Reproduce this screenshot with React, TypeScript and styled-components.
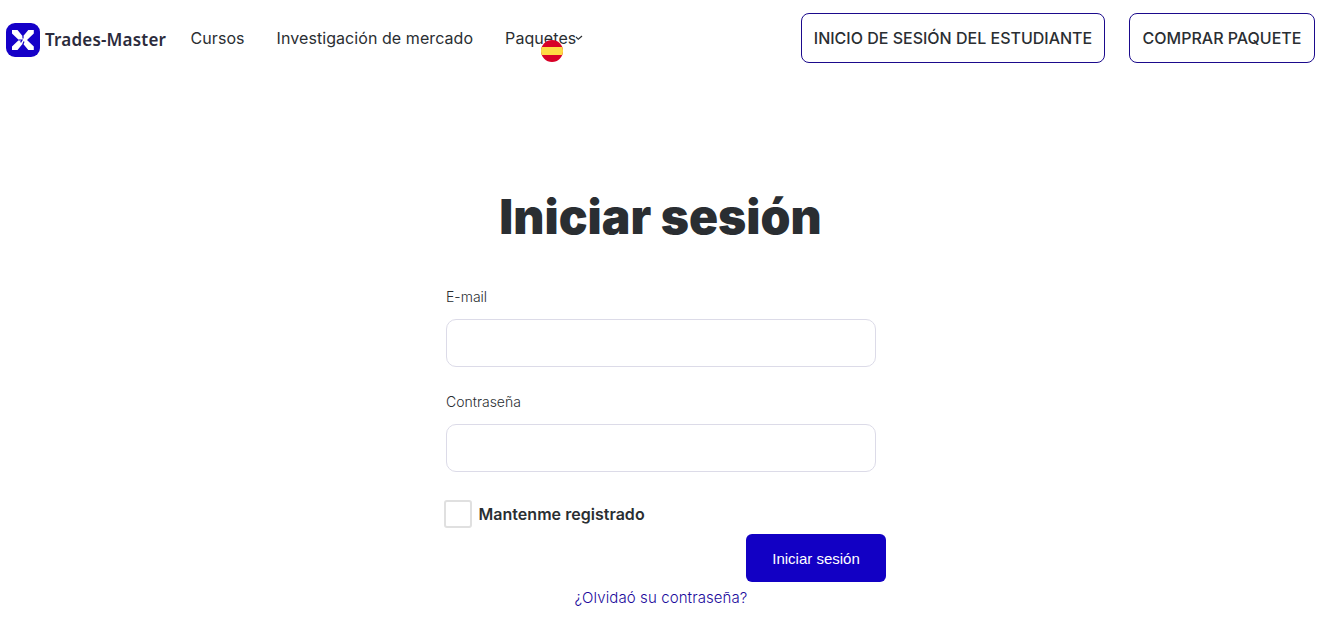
import { ReactNode } from "react"
import styled, { createGlobalStyle } from "styled-components"

const GlobalStyle = createGlobalStyle`
    * {
        box-sizing: border-box;
    }

    body {
        margin: 0;
        background: #fff;
        color: #2a2e32;
        font-family: Inter, "Liberation Sans", sans-serif;
    }
`

const Header = styled.header`
    display: flex;
    align-items: center;
    height: 76px;
    padding: 0 13px 0 6px;
`

const Logo = styled.a`
    display: flex;
    align-items: center;
    gap: 5px;
    width: 184.5px;
    margin-top: 4px;
`

const LogoText = styled.span`
    color: #2b2b3c;
    font-family: "Noto Sans", sans-serif;
    font-size: 17px;
    font-weight: 600;
    line-height: 24px;
    letter-spacing: 0.2px;
    white-space: nowrap;
`

const Nav = styled.nav`
    display: flex;
    gap: 32px;
`

const NavLink = styled.a`
    position: relative;
    display: flex;
    align-items: center;
    font-size: 16px;
    line-height: 24px;
    letter-spacing: 0.07px;
    white-space: nowrap;
`

const Chevron = styled.svg`
    margin-left: -1px;
`

const Flag = styled.svg`
    position: absolute;
    left: 36px;
    top: 14px;
`

const Actions = styled.div`
    display: flex;
    gap: 24px;
    margin-left: auto;
`

const OutlineButton = styled.a<{ $width: number }>`
    display: flex;
    align-items: center;
    justify-content: center;
    width: ${({ $width }) => $width}px;
    height: 50px;
    border: 1px solid #1b0a8c;
    border-radius: 8px;
    font-size: 16px;
    font-weight: 500;
    white-space: nowrap;
`

const Main = styled.main`
    display: flex;
    flex-direction: column;
    align-items: center;
    padding-top: 111px;
`

const Title = styled.h1`
    width: 430px;
    margin: 0 7px 0 0;
    font-size: 48px;
    font-weight: 900;
    line-height: 60px;
    text-align: center;
    white-space: nowrap;
`

const Form = styled.form`
    display: flex;
    flex-direction: column;
    width: 430px;
    margin: 39px 6px 0 0;
`

const Field = styled.label`
    display: flex;
    flex-direction: column;
    gap: 11px;
    margin-bottom: 24px;
    font-size: 14px;
    font-weight: 300;
    line-height: 22px;
`

const Input = styled.input`
    width: 100%;
    height: 48px;
    padding: 0 16px;
    border: 1px solid #dcdbe8;
    border-radius: 10px;
    outline: none;
    font: inherit;
`

const Remember = styled.label`
    display: flex;
    align-items: center;
    gap: 6.5px;
    margin: 4px 0 6px -2px;
    font-size: 16px;
    font-weight: 600;
    line-height: 28px;
    letter-spacing: 0.03px;
`

const Checkbox = styled.input`
    appearance: none;
    width: 28px;
    height: 28px;
    margin: 0;
    border: 2px solid #e0e0e0;
    border-radius: 3px;
`

const Submit = styled.button`
    align-self: flex-end;
    width: 140px;
    height: 48px;
    margin-right: -10px;
    padding: 0;
    border: 0;
    border-radius: 6px;
    background: #1200c4;
    color: #fff;
    font-family: "Liberation Sans", Arial, sans-serif;
    font-size: 15px;
`

const Forgot = styled.a`
    align-self: center;
    margin-top: 4px;
    color: #1b0a9c;
    font-size: 15px;
    font-weight: 300;
    line-height: 24px;
    letter-spacing: 0.1px;
    white-space: nowrap;
`

function LogoMark() {
    return (
        <svg width="34" height="34" viewBox="0 0 34 34">
            <rect width="34" height="34" rx="9" fill="#1500c8" />
            <path
                d="M6 7h5.5l5.4 6.4L22.3 7h5.5v3.5L21 17l6.8 6.5V27h-5.5l-5.4-6.4L11.5 27H6v-3.5l6.8-6.5L6 10.5z"
                fill="#fff"
            />
            <path
                d="M12.5 17h3.5l-1.4 2.4M17 13v2.5M18 18.5l-1 2.5"
                fill="none"
                stroke="#1500c8"
                strokeWidth="1.2"
            />
        </svg>
    )
}

function SpainFlag() {
    return (
        <Flag width="22" height="22" viewBox="0 0 22 22">
            <clipPath id="flag">
                <circle cx="11" cy="11" r="11" />
            </clipPath>
            <g clipPath="url(#flag)">
                <rect width="22" height="22" fill="#d80027" />
                <rect y="7" width="22" height="8" fill="#ffda44" />
            </g>
        </Flag>
    )
}

function FormField({ label, children }: { label: string; children: ReactNode }) {
    return (
        <Field>
            <span>{label}</span>
            {children}
        </Field>
    )
}

export default function App() {
    return (
        <>
            <GlobalStyle />
            <Header>
                <Logo>
                    <LogoMark />
                    <LogoText>Trades-Master</LogoText>
                </Logo>
                <Nav>
                    <NavLink>Cursos</NavLink>
                    <NavLink>Investigación de mercado</NavLink>
                    <NavLink>
                        Paquetes
                        <Chevron width="8" height="6" viewBox="0 0 8 6">
                            <path d="M1 2l2.3 2.3L7 1" fill="none" stroke="#2a2e32" strokeWidth="1.2" />
                        </Chevron>
                        <SpainFlag />
                    </NavLink>
                </Nav>
                <Actions>
                    <OutlineButton $width={304}>INICIO DE SESIÓN DEL ESTUDIANTE</OutlineButton>
                    <OutlineButton $width={186}>COMPRAR PAQUETE</OutlineButton>
                </Actions>
            </Header>
            <Main>
                <Title>Iniciar sesión</Title>
                <Form>
                    <FormField label="E-mail">
                        <Input type="email" />
                    </FormField>
                    <FormField label="Contraseña">
                        <Input type="password" />
                    </FormField>
                    <Remember>
                        <Checkbox type="checkbox" />
                        Mantenme registrado
                    </Remember>
                    <Submit type="button">Iniciar sesión</Submit>
                    <Forgot>¿Olvidaó su contraseña?</Forgot>
                </Form>
            </Main>
        </>
    )
}
